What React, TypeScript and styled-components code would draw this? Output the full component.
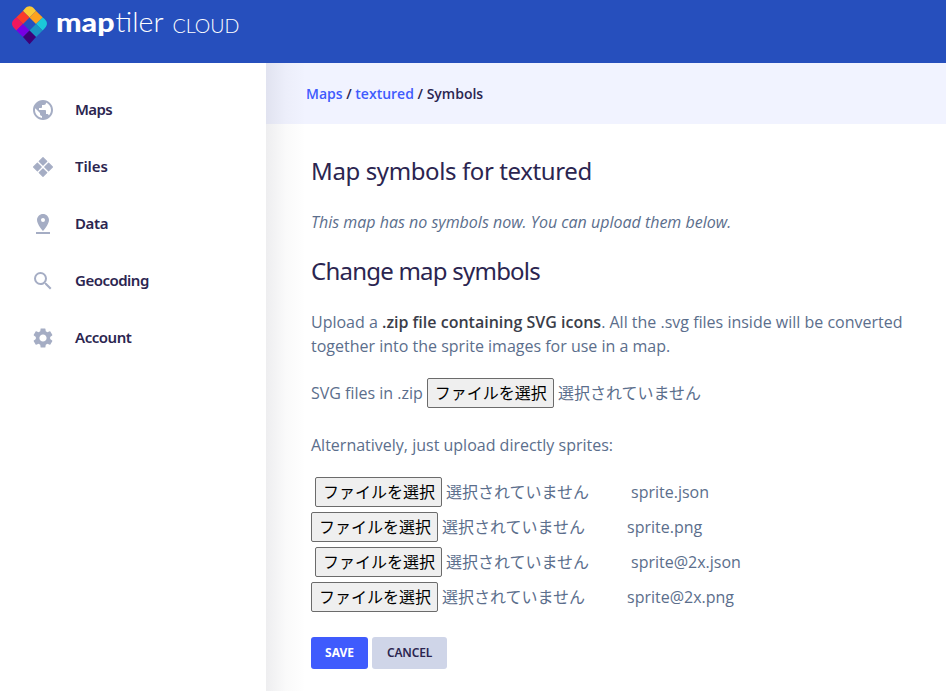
import React from 'react';
import styled, { createGlobalStyle } from 'styled-components';
import { MdPublic, MdPinDrop, MdSearch, MdSettings } from 'react-icons/md';

const GlobalStyle = createGlobalStyle`
  *, *::before, *::after { box-sizing: border-box; }
  body {
    margin: 0;
    background: #fff;
    color: #5b6e8c;
    font: 16px/24px 'Open Sans', 'Noto Sans CJK JP', sans-serif;
  }
  h2, p { margin: 0; }
`;

const Page = styled.div`
  display: flex;
  flex-direction: column;
  height: 691px;
  overflow: hidden;
`;

const Header = styled.header`
  flex: none;
  height: 63px;
  background: #264fbd;
`;

const Logo = styled.svg`
  display: block;
  width: 260px;
  height: 63px;
`;

const Body = styled.div`
  display: flex;
  flex: 1;
  min-height: 0;
`;

const Sidebar = styled.nav`
  flex: none;
  width: 266px;
  padding-top: 18px;
  background: #fff;
`;

const NavItem = styled.a`
  display: flex;
  align-items: center;
  gap: 20px;
  height: 57px;
  padding-left: 31px;
  color: #2b2550;
  font: 600 15px/24px 'Noto Sans', sans-serif;
  text-decoration: none;

  svg {
    width: 24px;
    height: 24px;
    color: #a5adc4;
    fill: currentColor;
  }
`;

const NavLabel = styled.span<{ $spacing: number }>`
  padding-bottom: 2px;
  letter-spacing: ${(p) => p.$spacing}px;
`;

const Main = styled.main`
  position: relative;
  flex: 1;
  min-width: 0;

  &::before {
    content: '';
    position: absolute;
    inset: 0 auto 0 0;
    width: 40px;
    background: linear-gradient(90deg, rgba(35, 35, 60, 0.08), rgba(40, 40, 50, 0.022) 50%, rgba(40, 40, 50, 0));
    pointer-events: none;
  }
`;

const Breadcrumb = styled.div`
  height: 61px;
  padding: 19px 40px;
  background: #f1f3ff;
  color: #2b2550;
  font-size: 14px;
  font-weight: 600;
  white-space: pre;

  a { color: #3f5bfd; text-decoration: none; }
`;

const Content = styled.div`
  padding: 31px 0 0 45px;
`;

const Heading = styled.h2<{ $spacing: number }>`
  height: 32px;
  color: #2b2550;
  font: 400 24px/32px 'Noto Sans', sans-serif;
  letter-spacing: ${(p) => p.$spacing}px;
`;

const EmptyNote = styled.p`
  margin: 23px 0 21px;
  font-style: italic;
`;

const Text = styled.p`
  margin-top: 23px;
  white-space: nowrap;

  b { color: #3a3d49; font-weight: 600; }
`;

const ZipRow = styled.label`
  display: flex;
  align-items: center;
  gap: 4px;
  height: 30px;
  margin-top: 20px;
`;

const AltText = styled.p`
  margin-top: 25px;
`;

const SpriteList = styled.div`
  display: flex;
  flex-direction: column;
  gap: 5px;
  margin-top: 20px;
`;

const SpriteRow = styled.label<{ $indent?: boolean }>`
  display: flex;
  align-items: center;
  height: 30px;
  padding-left: ${(p) => (p.$indent ? 4 : 0)}px;
`;

const FileField = styled.span<{ $width?: number }>`
  display: flex;
  align-items: center;
  flex: none;
  gap: 4px;
  width: ${(p) => (p.$width ? `${p.$width}px` : 'auto')};
  white-space: nowrap;
`;

const FileButton = styled.button`
  width: 127px;
  height: 30px;
  padding: 0 0 2px 1px;
  border: 1px solid #6b6b6b;
  border-radius: 2px;
  background: #efefef;
  color: #000;
  font: 16px/26px 'Noto Sans CJK JP', sans-serif;
`;

const Actions = styled.div`
  display: flex;
  gap: 4px;
  margin-top: 25px;
`;

const ActionButton = styled.button<{ $primary?: boolean }>`
  width: ${(p) => (p.$primary ? 57 : 75)}px;
  height: 32px;
  padding: 0;
  border: 0;
  border-radius: 3px;
  background: ${(p) => (p.$primary ? '#3f5bfd' : '#cfd5e8')};
  color: ${(p) => (p.$primary ? '#fff' : '#2b2550')};
  font: ${(p) => (p.$primary ? 700 : 600)} 12px/32px 'Noto Sans', sans-serif;
  letter-spacing: ${(p) => (p.$primary ? 0 : -0.15)}px;
`;

const TilesIcon = () => (
  <svg viewBox="0 0 24 24" stroke="currentColor" strokeWidth="1.2" strokeLinejoin="round">
    <path d="M12 2.6l3.8 3.8-3.8 3.8-3.8-3.8zM6.4 8.2l3.8 3.8-3.8 3.8L2.6 12zM17.6 8.2l3.8 3.8-3.8 3.8-3.8-3.8zM12 13.8l3.8 3.8-3.8 3.8-3.8-3.8z" />
  </svg>
);

const Brand = () => (
  <Logo viewBox="0 0 260 63">
    <g>
      <path fill="#fbc935" d="M22.9 11L25 8.6C27.5 5.4 31.5 5.4 34 8.6L36.1 11 29.5 17.5z" />
      <path fill="#fb3a2b" d="M22.9 11l6.6 6.5-6.5 6.5-6.8-6.6z" />
      <path fill="#fda21f" d="M36.1 11l6.7 6.4L36 24l-6.5-6.5z" />
      <path fill="#f1175d" d="M16.2 17.4L23 24l-6.6 6.5-1.9-2C11.2 25.3 11.2 22.2 14.4 19.1z" />
      <path fill="#1bc8d8" d="M42.8 17.4L36 24l6.6 6.5 1.9-2C47.8 25.3 47.8 22.2 44.6 19.1z" />
      <path fill="#7800e3" d="M23 24l6.5 6.5L23 37l-6.6-6.5z" />
      <path fill="#1a94c4" d="M36 24l6.6 6.5L36 37l-6.5-6.5z" />
      <path fill="#3e0078" d="M29.5 30.5L36 37l-6.5 7.2L23 37z" />
    </g>
    <g fill="#fff" fontFamily="Lato, sans-serif">
      <text x="56" y="32.3" fontSize="27" fontWeight="900" textLength="58.5" lengthAdjust="spacingAndGlyphs">map</text>
      <text x="115.5" y="32.3" fontSize="27" fontWeight="300" textLength="48" lengthAdjust="spacingAndGlyphs">tiler</text>
      <text x="172.5" y="32.6" fontSize="19.5" fontWeight="300" textLength="67" lengthAdjust="spacingAndGlyphs">CLOUD</text>
    </g>
  </Logo>
);

const navigation = [
  { label: 'Maps', icon: <MdPublic />, spacing: -0.6 },
  { label: 'Tiles', icon: <TilesIcon />, spacing: -0.1 },
  { label: 'Data', icon: <MdPinDrop />, spacing: -0.4 },
  { label: 'Geocoding', icon: <MdSearch />, spacing: -0.5 },
  { label: 'Account', icon: <MdSettings />, spacing: -0.45 },
];

const sprites = ['sprite.json', 'sprite.png', 'sprite@2x.json', 'sprite@2x.png'];

const FileInput = ({ width }: { width?: number }) => (
  <FileField $width={width}>
    <FileButton type="button">ファイルを選択</FileButton>
    <span>選択されていません</span>
  </FileField>
);

export default function App() {
  return (
    <Page>
      <GlobalStyle />
      <Header>
        <Brand />
      </Header>
      <Body>
        <Sidebar>
          {navigation.map(({ label, icon, spacing }) => (
            <NavItem key={label}>
              {icon}
              <NavLabel $spacing={spacing}>{label}</NavLabel>
            </NavItem>
          ))}
        </Sidebar>
        <Main>
          <Breadcrumb>
            <a>Maps</a> / <a>textured</a> / Symbols
          </Breadcrumb>
          <Content>
            <Heading $spacing={-0.39}>Map symbols for textured</Heading>
            <EmptyNote>This map has no symbols now. You can upload them below.</EmptyNote>
            <Heading $spacing={-0.77}>Change map symbols</Heading>
            <Text>
              Upload a <b>.zip file containing SVG icons</b>. All the .svg files inside will be converted
              <br />
              together into the sprite images for use in a map.
            </Text>
            <ZipRow>
              <span>SVG files in .zip</span>
              <FileInput />
            </ZipRow>
            <AltText>Alternatively, just upload directly sprites:</AltText>
            <SpriteList>
              {sprites.map((name, i) => (
                <SpriteRow key={name} $indent={i % 2 === 0}>
                  <FileInput width={316} />
                  <span>{name}</span>
                </SpriteRow>
              ))}
            </SpriteList>
            <Actions>
              <ActionButton $primary>SAVE</ActionButton>
              <ActionButton>CANCEL</ActionButton>
            </Actions>
          </Content>
        </Main>
      </Body>
    </Page>
  );
}
